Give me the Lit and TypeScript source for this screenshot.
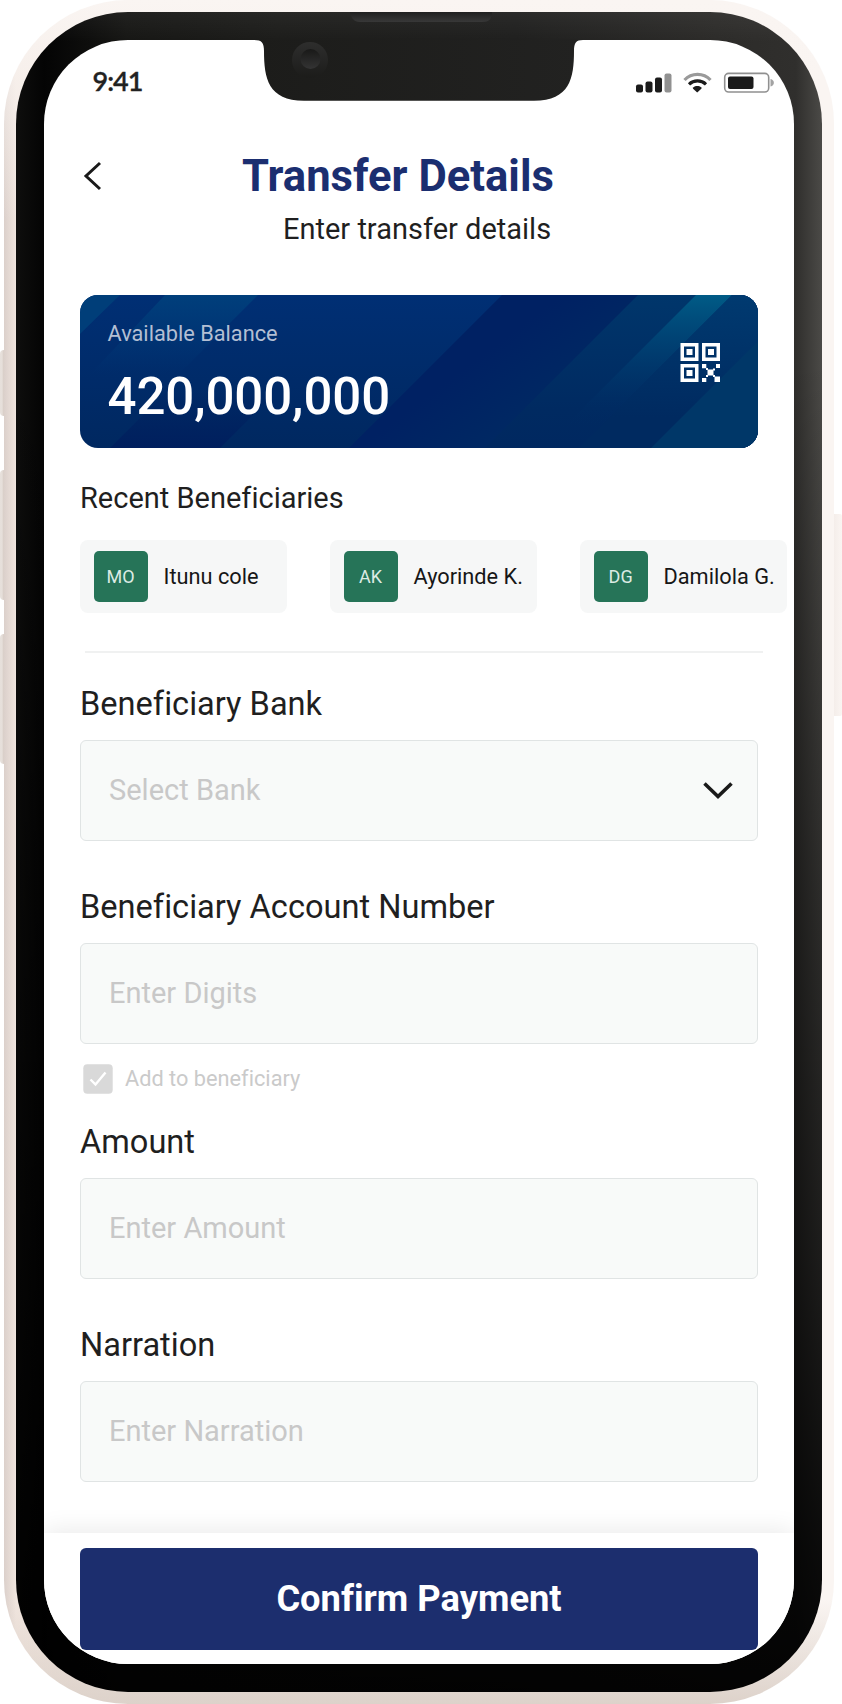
import { LitElement, html, css, svg } from "lit";
import { customElement, property } from "lit/decorators.js";

@customElement("form-field")
class FormField extends LitElement {
  @property() label = "";
  @property() hint = "";
  @property({ type: Boolean }) select = false;

  static styles = css`
    :host { display: flex; flex-direction: column; gap: 16px; }
    .label { height: 40px; line-height: 40px; font-size: 32.6px; color: #1f1f1f; white-space: nowrap; }
    .box {
      display: flex; align-items: center; justify-content: space-between;
      height: 101px; box-sizing: border-box; padding: 0 24px 1px 28px;
      border: 1.5px solid #e0e4e4; border-radius: 6px;
      background: #f8faf9; color: #c8c8c8; font-size: 29px;
    }
    .arrow { margin-top: 2px; }
  `;

  render() {
    return html`
      <div class="label">${this.label}</div>
      <div class="box">
        <span>${this.hint}</span>
        ${this.select
          ? html`<svg class="arrow" width="30" height="20" viewBox="0 0 30 20"><path d="M1.500 2.500 15 15.500 28.500 2.500" fill="none" stroke="#1a1a1a" stroke-width="3.6"/></svg>`
          : ""}
      </div>
    `;
  }
}

@customElement("app-root")
class AppRoot extends LitElement {
  static styles = css`
    :host {
      display: block; position: relative; width: 842px; height: 1704px;
      overflow: hidden; background: #fff; font-family: Roboto, sans-serif; color: #1f1f1f;
      font-variant-ligatures: none;
    }
    .side { position: absolute; background: linear-gradient(90deg, #e6e0db 0, #e6dfda 2px, #d6cbc4 4px); border-radius: 4px 0 0 4px; width: 8px; left: 0; }
    .mute { top: 350px; height: 66px; }
    .up { top: 470px; height: 130px; }
    .down { top: 634px; height: 130px; }
    .power { left: auto; right: 0; width: 10px; top: 514px; height: 202px; background: linear-gradient(90deg, #f3ece8, #faf5f2); border-radius: 0 2px 2px 0; }
    .shell {
      position: relative; margin-left: 4px; width: 830px; height: 1704px; box-sizing: border-box; padding: 12px;
      border-radius: 124px;
      background: linear-gradient(180deg, #faf5f2 0, rgba(250,245,242,0) 220px, rgba(222,211,204,0) 1600px, #ddd2ca 1704px),
        linear-gradient(90deg, #dbd0cb 0, #f0e5de 12px, #f5ede9 400px, #faf5f2 818px, #faf5f2 100%);
    }
    .bezel {
      box-sizing: border-box; height: 1680px; padding: 28px; border-radius: 112px;
      background: linear-gradient(180deg, rgba(255,255,255,.05) 0, rgba(255,255,255,0) 30px),
        linear-gradient(180deg, rgba(0,0,0,0) 0, rgba(0,0,0,0) 350px, rgba(0,0,0,.38) 850px, rgba(0,0,0,.62) 1250px, rgba(0,0,0,.85) 1540px, rgba(0,0,0,.92) 100%),
        linear-gradient(90deg, #0e0e0d 0, #040404 28px, #161614 110px, #1c1c1a 260px, #1f1f1e 500px, #2c2b29 700px, #302f2d 780px, #4b4a47 806px);
    }
    .screen {
      display: flex; flex-direction: column;
      height: 1624px; border-radius: 84px; overflow: hidden; background: #fff;
    }
    .notch { position: absolute; left: 246px; top: 12px; }
    .status { display: flex; justify-content: space-between; align-items: center; flex: none; height: 84px; padding: 2px 19.5px 0 48.5px; box-sizing: border-box; }
    .time { font: 600 27px/30px Lato, sans-serif; letter-spacing: -1px; margin-top: -4px; color: #222; -webkit-text-stroke: .3px #222; }
    .head { height: 171px; flex: none; }
    .bar { display: flex; align-items: center; height: 104px; padding-left: 39px; gap: 139px; }
    h1 { margin: 1px 0 0; font-size: 43.6px; font-weight: 700; line-height: 50px; color: #1b2e70; white-space: nowrap; }
    .sub { height: 40px; line-height: 40px; margin: -19px 0 0 239px; font-size: 29px; }
    .card {
      position: relative; margin: 0 36px; height: 152.5px; border-radius: 18px; overflow: hidden;
      display: flex; justify-content: space-between; flex: none;
    }
    .art { position: absolute; inset: 0; }
    .money { position: relative; padding: 25px 0 0 27.5px; color: #fff; }
    .avail { font-size: 21.75px; line-height: 28px; color: #b3bfd3; }
    .sum { font-size: 51px; line-height: 60px; font-weight: 500; margin-top: 18.5px; letter-spacing: -.1px; }
    .qr { position: relative; margin: 47px 37px 0 0; }
    .recent { margin: 30px 36px 0; height: 40px; flex: none; line-height: 40px; font-size: 29px; }
    .chips { display: flex; gap: 43.5px; margin: 22.5px 0 0 36px; }
    .chip { display: flex; align-items: center; flex: none; box-sizing: border-box; width: 206.5px; height: 72.5px; padding: 1px 0 0 14.4px; gap: 15.6px; border-radius: 8px; background: #f6f7f7; font-size: 21.75px; color: #161616; white-space: nowrap; }
    .avatar { display: flex; align-items: center; justify-content: center; box-sizing: border-box; padding-right: 1px; width: 53.5px; height: 51px; border-radius: 5px; background: #267458; color: #dcebe4; font-size: 18px; }
    .rule { height: 2px; margin: 38.5px 31px 0 41.4px; background: #f0f1f1; flex: none; }
    .form { display: flex; flex-direction: column; gap: 45px; margin: 30.5px 36px 0; }
    .check { display: flex; align-items: center; height: 30px; margin: -25px 0 -17px 3px; gap: 12px; font-size: 21.75px; color: #cacaca; }
    .foot { margin-top: auto; height: 131px; flex: none; box-sizing: border-box; padding: 15px 36px 0; background: #fff; box-shadow: 0 -2px 24px rgba(0,0,0,.09); }
    .pay { height: 101.5px; display: flex; align-items: center; justify-content: center; border-radius: 6px; background: #1c2e6e; color: #fff; font-size: 36.3px; font-weight: 700; }
    form-field + form-field { margin-top: 1px; }
  `;

  private people = [["MO", "Itunu cole"], ["AK", "Ayorinde K."], ["DG", "Damilola G."]];

  private finder(x: number, y: number) {
    return svg`<rect x=${x + 1.75} y=${y + 1.75} width="14.5" height="14.5" fill="none" stroke="#fff" stroke-width="3.5"/><rect x=${x + 6} y=${y + 6} width="6" height="6" fill="#fff"/>`;
  }

  render() {
    return html`
      <div class="side mute"></div><div class="side up"></div><div class="side down"></div><div class="side power"></div>
      <div class="shell">
        <div class="bezel"><div class="screen">
          <div class="status">
            <span class="time">9:41</span>
            <svg width="140" height="22" viewBox="0 0 140 22">
              <g fill="#1b1b1b">
                <rect x="1" y="12.5" width="7" height="8" rx="2"/><rect x="10.5" y="9.5" width="7" height="11" rx="2"/>
                <rect x="20" y="5.5" width="7" height="15" rx="2"/><rect x="29.5" y="1.5" width="7" height="19" rx="2" fill="#919191"/>
                <path d="M58.5 15.2c1.6-1.5 5.9-1.5 7.5 0l.6 1.4-4.4 3.9-4.4-3.9z"/>
              </g>
              <g fill="none" stroke-width="3.2">
                <path d="M49.5 8a18 18 0 0 1 26 0" stroke="#9a9a9a"/>
                <path d="M54 12.3a12.5 12.5 0 0 1 17 0" stroke="#1b1b1b"/>
              </g>
              <rect x="89.7" y="1.4" width="44" height="18.6" rx="4" fill="none" stroke="#909090" stroke-width="1.6"/>
              <rect x="93" y="4.5" width="25.5" height="12.5" rx="2" fill="#1b1b1b"/>
              <path d="M135.5 7c4.5 1 4.5 6.5 0 7.5z" fill="#a3a3a3"/>
            </svg>
          </div>
          <div class="head">
            <div class="bar">
              <svg width="20" height="30" viewBox="0 0 20 30"><path d="M17 2 3 15 17 28" fill="none" stroke="#1a1a1a" stroke-width="3"/></svg>
              <h1>Transfer Details</h1>
            </div>
            <div class="sub">Enter transfer details</div>
          </div>
          <div class="card">
            <svg class="art" width="678" height="153" viewBox="0 0 678 153">
              <defs>
                <linearGradient id="base" x1="0" y1="0" x2="0" y2="1"><stop stop-color="#002f74"/><stop offset="1" stop-color="#002860"/></linearGradient>
                <linearGradient id="glow" x1="0" y1="0" x2="0" y2="1"><stop stop-color="#003f7b"/><stop offset=".7" stop-color="#003a78" stop-opacity="0"/></linearGradient>
                <linearGradient id="deep" x1="0" y1="0" x2="0" y2="1"><stop stop-color="#00205f" stop-opacity="0"/><stop offset="1" stop-color="#001f5e"/></linearGradient>
                <linearGradient id="fade" x1="0" y1="0" x2="1" y2="0"><stop stop-color="#002a65"/><stop offset=".35" stop-color="#002a65"/><stop offset="1" stop-color="#002a65" stop-opacity="0"/></linearGradient>
                <linearGradient id="fold" gradientUnits="userSpaceOnUse" x1="235" y1="185" x2="280" y2="245"><stop stop-color="#002163"/><stop offset="1" stop-color="#002863"/></linearGradient>
                <linearGradient id="edge" x1="0" y1="0" x2="0" y2="1"><stop stop-color="#00366b"/><stop offset=".75" stop-color="#002a61"/><stop offset="1" stop-color="#002860"/></linearGradient>
                <linearGradient id="ray" x1="0" y1="0" x2="0" y2="1"><stop stop-color="#005b86"/><stop offset=".85" stop-color="#002c64" stop-opacity="0"/></linearGradient>
                <linearGradient id="tip" x1="0" y1="0" x2="0" y2="1"><stop stop-color="#003a70"/><stop offset=".8" stop-color="#002a60"/></linearGradient>
              </defs>
              <rect width="678" height="153" fill="url(#base)"/>
              <path d="M0 0H40L0 39z" fill="#003e79"/>
              <path d="M85 0H178L66 112 0 90z" fill="url(#glow)"/>
              <path d="M30 153 90 93H200L140 153z" fill="url(#deep)"/>
              <path d="M422 0H678V153H269z" fill="url(#fold)"/>
              <path d="M558 0H678V153H405z" fill="url(#edge)"/>
              <path d="M616 0H652L499 153H463z" fill="url(#ray)"/>
              <path d="M652 0H678V153H499z" fill="url(#tip)"/>
              <path d="M678 46V153H571z" fill="#003768"/>
            </svg>
            <div class="money"><div class="avail">Available Balance</div><div class="sum">420,000,000</div></div>
            <svg class="qr" width="41" height="41" viewBox="0 0 41 41">
              ${this.finder(0.5, 1)}${this.finder(22, 1)}${this.finder(0.5, 22)}
              <path d="M22 22h4.300v4.300H22zM36 22h4v4h-4zM27.500 27.500h6v6h-6zM34.500 34.500H40V40h-5.500zM22 36h4.300v4H22zM26 26h2v2h-2zM33 26.500h2v2h-2zM33 33h2v2H33zM26 33h2v2h-2z" fill="#fff"/>
            </svg>
          </div>
          <div class="recent">Recent Beneficiaries</div>
          <div class="chips">
            ${this.people.map(([i, n]) => html`<div class="chip"><span class="avatar">${i}</span><span>${n}</span></div>`)}
          </div>
          <div class="rule"></div>
          <div class="form">
            <form-field label="Beneficiary Bank" hint="Select Bank" select></form-field>
            <form-field label="Beneficiary Account Number" hint="Enter Digits"></form-field>
            <div class="check">
              <svg width="30" height="30" viewBox="0 0 30 30"><rect x=".3" y=".3" width="29.4" height="29.4" rx="4" fill="#d9d9d9"/><path d="M7.5 15.5 12.5 20.5 22.5 8.5" fill="none" stroke="#fff" stroke-width="2.4"/></svg>
              <span>Add to beneficiary</span>
            </div>
            <form-field label="Amount" hint="Enter Amount"></form-field>
            <form-field label="Narration" hint="Enter Narration"></form-field>
          </div>
          <div class="foot"><div class="pay">Confirm Payment</div></div>
        </div></div>
        <svg class="notch" width="334" height="90" viewBox="250 12 334 90">
          <defs>
            <linearGradient id="body" x1="0" y1="0" x2="1" y2="0"><stop stop-color="#1c1c1a"/><stop offset="1" stop-color="#222221"/></linearGradient>
            <linearGradient id="ear" x1="0" y1="0" x2="0" y2="1"><stop stop-color="#1f1f1f"/><stop offset="1" stop-color="#383838"/></linearGradient>
            <linearGradient id="cam" x1="0" y1="0" x2="0" y2="1"><stop stop-color="#2e2e2d"/><stop offset="1" stop-color="#1c1c1a"/></linearGradient>
            <linearGradient id="lens" x1="0" y1="0" x2="0" y2="1"><stop stop-color="#191918"/><stop offset="1" stop-color="#343434"/></linearGradient>
          </defs>
          <path d="M254 39.5V40C262 40 264 43 264 51C264 78 268 100.7 304 100.7H534C570 100.7 574 78 574 51C574 43 576 40 583 40V39.5z" fill="url(#body)"/>
          <path d="M350 12H492C492 19 489 22 482 22H360C354 22 351 18 350 12z" fill="url(#ear)"/>
          <circle cx="310" cy="60" r="18" fill="url(#cam)"/>
          <circle cx="310.5" cy="59" r="10" fill="url(#lens)"/>
        </svg>
      </div>
    `;
  }
}
